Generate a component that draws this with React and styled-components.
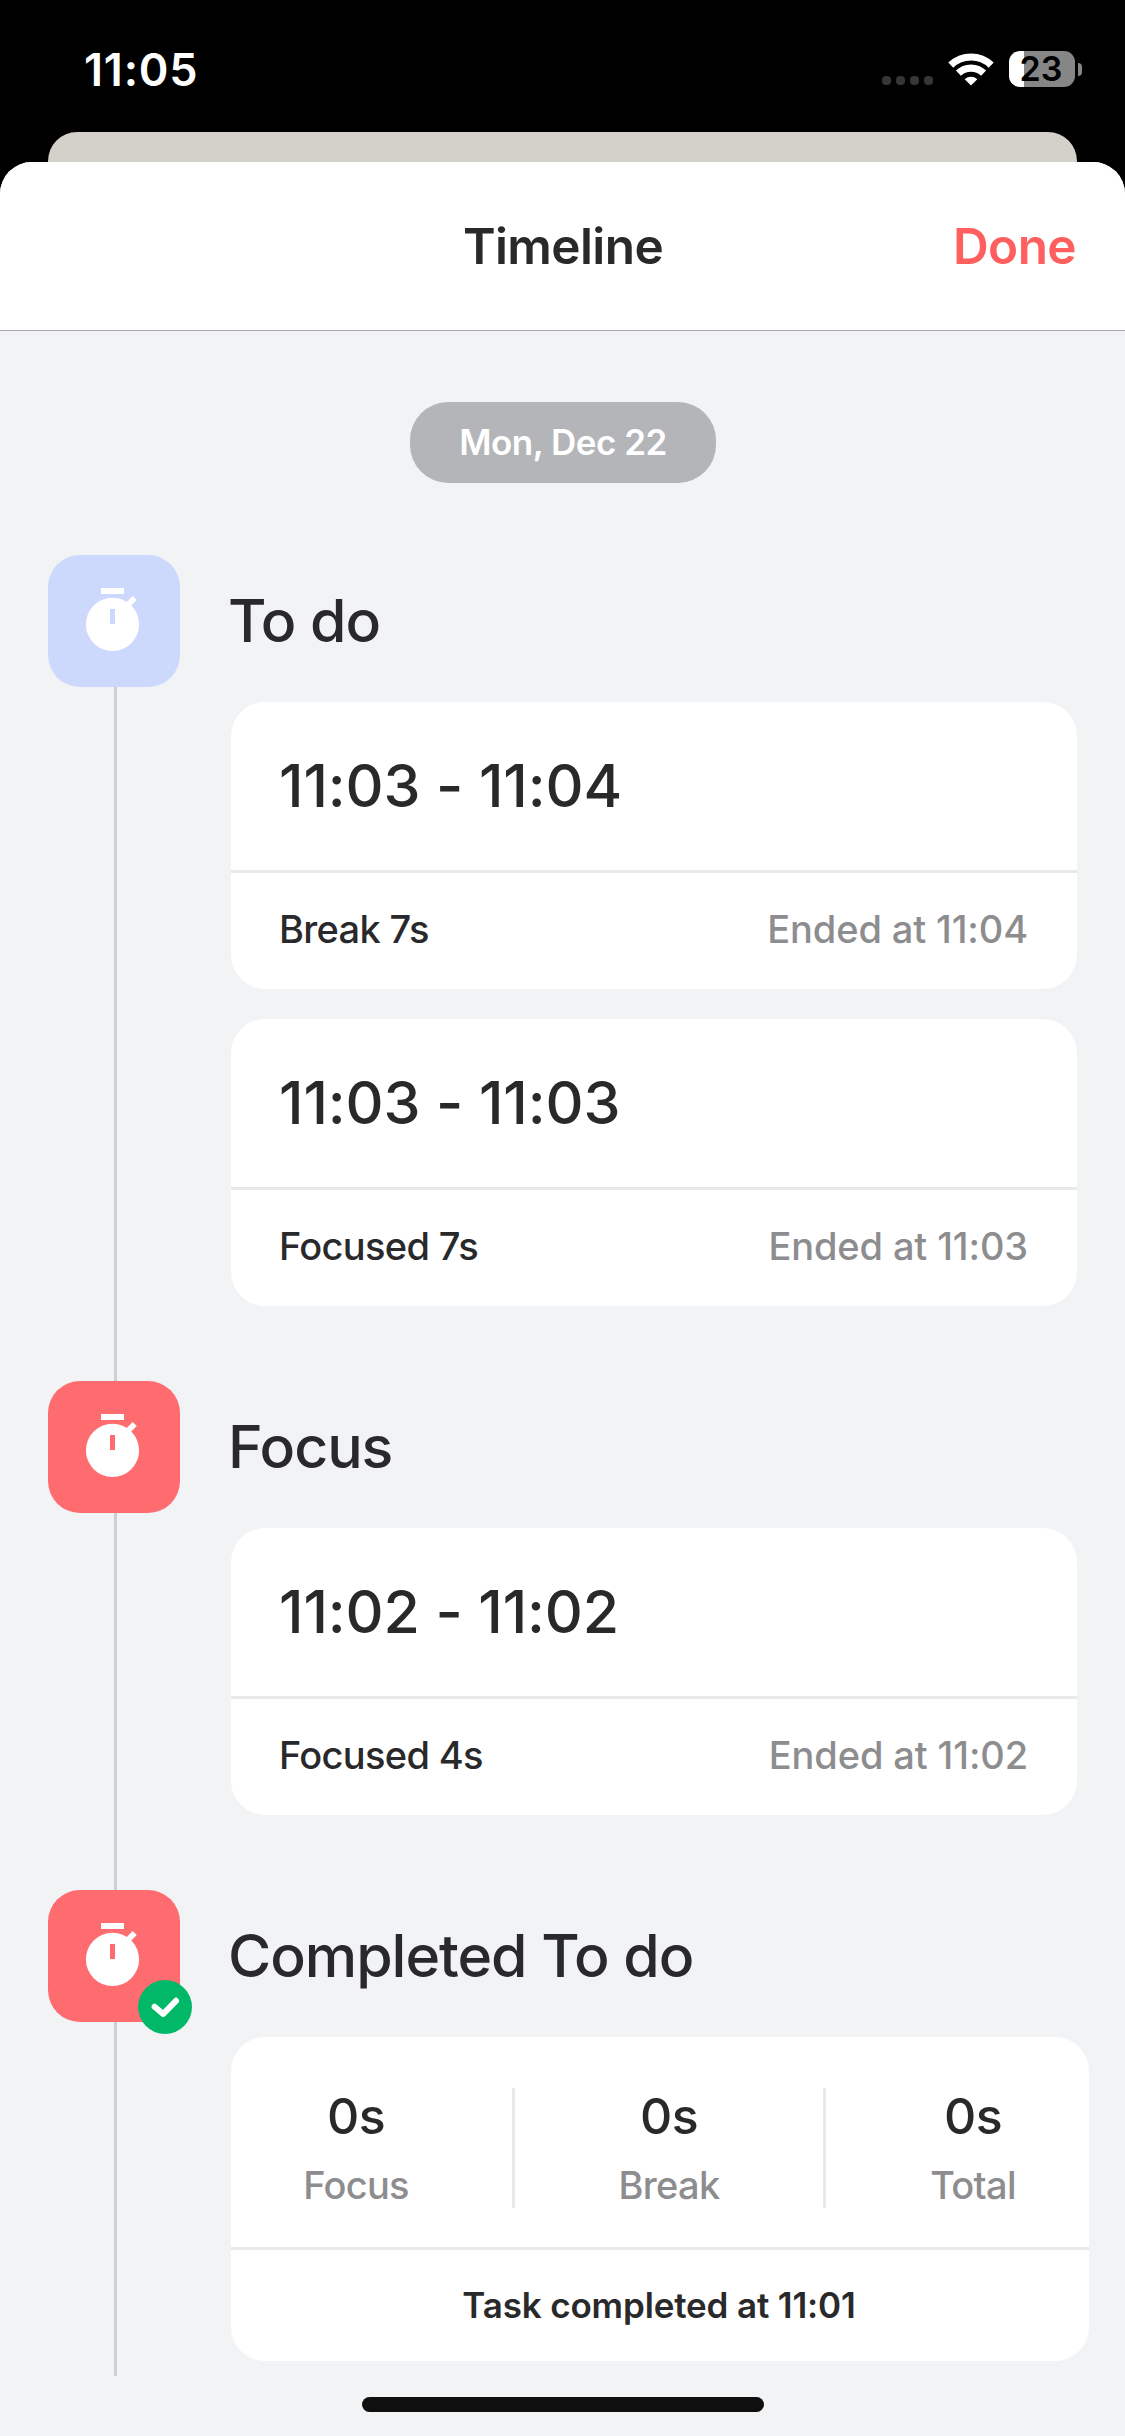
import React from "react";
import styled, { createGlobalStyle } from "styled-components";

const GlobalStyle = createGlobalStyle`
  * {
    box-sizing: border-box;
  }
  body {
    margin: 0;
    background: #000;
    font-family: Inter, "Liberation Sans", sans-serif;
    color: #29292b;
  }
`;

// STATUS BAR
const Screen = styled.div`
  position: relative;
  width: 1125px;
  height: 2436px;
  overflow: hidden;
  display: flex;
  flex-direction: column;
  background: #000;
`;
const StatusBar = styled.div`
  height: 132px;
  padding: 6px 43px 0 84px;
  display: flex;
  justify-content: space-between;
  align-items: center;
`;
const Clock = styled.div`
  color: #fff;
  font-size: 45px;
  font-weight: 600;
  letter-spacing: 0.8px;
`;
const StatusIcons = styled.div`
  display: flex;
  align-items: center;
`;
const Dots = styled.div`
  display: flex;
  gap: 5px;
  margin: 23px 15px 0 0;
`;
const Dot = styled.span`
  width: 9px;
  height: 9px;
  border-radius: 4px;
  background: #363636;
`;
const Battery = styled.div`
  width: 66px;
  height: 36px;
  margin: 0 3px 0 15px;
  padding-right: 2px;
  border-radius: 11px;
  background: linear-gradient(to right, #fff 15px, #868686 15px);
  color: #000;
  font-size: 34px;
  font-weight: 600;
  line-height: 36px;
  text-align: center;
`;
const BatteryCap = styled.span`
  width: 4px;
  height: 13px;
  border-radius: 0 4px 4px 0;
  background: #868686;
`;

// SHEET
const BackSheet = styled.div`
  height: 30px;
  margin: 0 48px;
  border-radius: 29px 29px 0 0;
  background: #d4d0ca;
`;
const Sheet = styled.section`
  flex: 1;
  border-radius: 32px 32px 0 0;
  overflow: hidden;
  background: #f2f3f5;
`;
const Header = styled.header`
  height: 169px;
  padding: 0 49px 0 50px;
  display: grid;
  grid-template-columns: 1fr auto 1fr;
  align-items: center;
  background: #fff;
  border-bottom: 1px solid #a9a9ab;
`;
const Title = styled.h1`
  grid-column: 2;
  margin: 0;
  font-size: 49.5px;
  font-weight: 600;
  letter-spacing: -0.6px;
`;
const Done = styled.button`
  justify-self: end;
  padding: 0;
  border: 0;
  background: none;
  color: #ff5f5f;
  font: inherit;
  font-size: 49.5px;
  font-weight: 600;
  letter-spacing: -0.6px;
`;
const DatePill = styled.div`
  width: 306px;
  height: 81px;
  margin: 71px auto 72px 410px;
  border-radius: 38px;
  background: #b4b5b9;
  color: #fff;
  font-size: 35px;
  font-weight: 600;
  letter-spacing: -0.5px;
  line-height: 81px;
  text-align: center;
`;

// TIMELINE
const Group = styled.div`
  display: grid;
  grid-template-columns: 132px 1fr;
  column-gap: 51px;
  padding: 0 ${({ $wide }) => ($wide ? 36 : 48)}px 0 48px;
`;
const Rail = styled.div`
  display: flex;
  flex-direction: column;
`;
const RailLine = styled.div`
  flex: 1;
  width: 3px;
  margin-left: 66px;
  background: #cecfd1;
`;
const Tile = styled.div`
  position: relative;
  width: 132px;
  height: 132px;
  border-radius: 32px;
  background: ${({ $color }) => $color};
`;
const Badge = styled.div`
  position: absolute;
  right: -12px;
  bottom: -12px;
  width: 54px;
  height: 54px;
  border-radius: 50%;
  background: #00b868;
`;
const GroupBody = styled.div`
  padding-bottom: ${({ $last }) => ($last ? 15 : 75)}px;
`;
const GroupTitle = styled.h2`
  margin: 0 0 15px -3px;
  height: 132px;
  line-height: 132px;
  font-size: 59px;
  font-weight: 500;
  letter-spacing: -1.05px;
`;
const Card = styled.div`
  border-radius: 34px;
  background: #fff;

  & + & {
    margin-top: 30px;
  }
`;
const Range = styled.div`
  height: 168px;
  padding-left: 48px;
  line-height: 168px;
  font-size: 59px;
  font-weight: 500;
  letter-spacing: -0.1px;
`;
const CardFooter = styled.div`
  height: 119px;
  padding: 0 49px 5px 48px;
  display: flex;
  justify-content: space-between;
  align-items: center;
  border-top: 3px solid #e9e9ea;
  font-size: 38px;
  font-weight: 500;
  letter-spacing: -0.68px;
`;
const Muted = styled.span`
  color: #8d8d8f;
  letter-spacing: -0.12px;
`;
const Stats = styled.div`
  height: 210px;
  padding-top: 51px;
  display: grid;
  grid-template-columns: 250px 31px 314px 31px 232px;
`;
const Stat = styled.div`
  grid-column: ${({ $column }) => $column};
  height: 120px;
  display: flex;
  flex-direction: column;
  align-items: center;
  gap: 18px;
`;
const MiddleStat = styled(Stat)`
  border: solid #e9e9ea;
  border-width: 0 3px;
`;
const StatValue = styled.div`
  line-height: 56px;
  font-size: 50px;
  font-weight: 500;
  letter-spacing: -0.5px;
`;
const StatLabel = styled.div`
  line-height: 46px;
  font-size: 38px;
  font-weight: 500;
  letter-spacing: -0.7px;
  color: #8d8d8f;
`;
const Summary = styled.div`
  height: 114px;
  padding-right: 2px;
  border-top: 3px solid #e9e9ea;
  line-height: 111px;
  font-size: 35px;
  font-weight: 600;
  letter-spacing: -0.15px;
  text-align: center;
`;
const HomeIndicator = styled.div`
  position: absolute;
  left: 362px;
  bottom: 24px;
  width: 402px;
  height: 15px;
  border-radius: 8px;
  background: #0f0f0f;
`;

const groups = [
  {
    title: "To do",
    color: "#cdd9fc",
    sessions: [
      { range: "11:03 - 11:04", label: "Break 7s", ended: "Ended at 11:04" },
      { range: "11:03 - 11:03", label: "Focused 7s", ended: "Ended at 11:03" }
    ]
  },
  {
    title: "Focus",
    color: "#ff6c70",
    sessions: [
      { range: "11:02 - 11:02", label: "Focused 4s", ended: "Ended at 11:02" }
    ]
  }
];

const WifiIcon = () => (
  <svg width="46" height="34" viewBox="0 0 46 34">
    <g fill="none" stroke="#fff" strokeWidth="7.2">
      <path d="M2.8 13.1a29.2 29.2 0 0 1 40.4 0" />
      <path d="M10.4 21.1a18.2 18.2 0 0 1 25.2 0" />
    </g>
    <path d="M23 33.6l-6.3-6.4a9.2 9.2 0 0 1 12.6 0z" fill="#fff" />
  </svg>
);

const TimerIcon = ({ color }) => (
  <svg width="132" height="132" viewBox="0 0 132 132">
    <path d="M53 33h23v6H53z" fill="#fff" />
    <circle cx="64.5" cy="69.4" r="26.6" fill="#fff" />
    <path d="M78 51.7L86.7 43" stroke="#fff" strokeWidth="5.8" />
    <path d="M62 54h5v15h-5z" fill={color} />
  </svg>
);

const CheckIcon = () => (
  <svg width="54" height="54" viewBox="0 0 54 54">
    <path
      d="M16.6 26.8l8.6 7.2 12.8-13.2"
      fill="none"
      stroke="#fff"
      strokeWidth="6"
      strokeLinecap="round"
      strokeLinejoin="round"
    />
  </svg>
);

// COMPONENT
const TimelineGroup = ({ title, color, completed, children }) => (
  <Group $wide={completed}>
    <Rail>
      <Tile $color={color}>
        <TimerIcon color={color} />
        {completed && (
          <Badge>
            <CheckIcon />
          </Badge>
        )}
      </Tile>
      <RailLine />
    </Rail>
    <GroupBody $last={completed}>
      <GroupTitle>{title}</GroupTitle>
      {children}
    </GroupBody>
  </Group>
);

const App = () => (
  <>
    <GlobalStyle />
    <Screen>
      <StatusBar>
        <Clock>11:05</Clock>
        <StatusIcons>
          <Dots>
            <Dot />
            <Dot />
            <Dot />
            <Dot />
          </Dots>
          <WifiIcon />
          <Battery>23</Battery>
          <BatteryCap />
        </StatusIcons>
      </StatusBar>
      <BackSheet />
      <Sheet>
        <Header>
          <Title>Timeline</Title>
          <Done>Done</Done>
        </Header>
        <DatePill>Mon, Dec 22</DatePill>
        {groups.map(({ title, color, sessions }) => (
          <TimelineGroup key={title} title={title} color={color}>
            {sessions.map(({ range, label, ended }) => (
              <Card key={range}>
                <Range>{range}</Range>
                <CardFooter>
                  <span>{label}</span>
                  <Muted>{ended}</Muted>
                </CardFooter>
              </Card>
            ))}
          </TimelineGroup>
        ))}
        <TimelineGroup title="Completed To do" color="#ff6c70" completed>
          <Card>
            <Stats>
              <Stat $column="1">
                <StatValue>0s</StatValue>
                <StatLabel>Focus</StatLabel>
              </Stat>
              <MiddleStat $column="3">
                <StatValue>0s</StatValue>
                <StatLabel>Break</StatLabel>
              </MiddleStat>
              <Stat $column="5">
                <StatValue>0s</StatValue>
                <StatLabel>Total</StatLabel>
              </Stat>
            </Stats>
            <Summary>Task completed at 11:01</Summary>
          </Card>
        </TimelineGroup>
      </Sheet>
      <HomeIndicator />
    </Screen>
  </>
);

export default App;
